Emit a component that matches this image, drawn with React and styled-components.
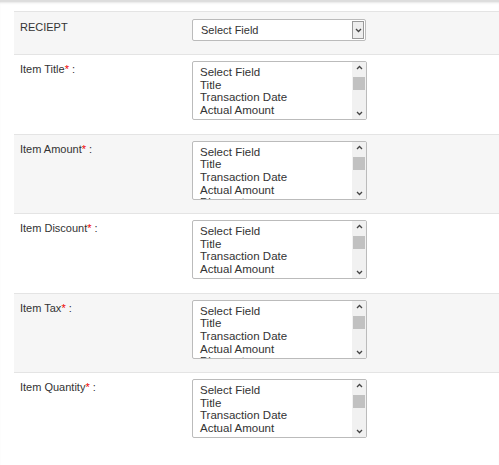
import React from "react";
import styled, { createGlobalStyle } from "styled-components";

const G = createGlobalStyle`
  body { margin: 0; background: #fff; font-family: "Liberation Sans", Arial, sans-serif; }
`;
const Page = styled.div`
  width: 499px; height: 465px; overflow: hidden; position: relative;
  border-top: 1px solid #ddd; box-shadow: inset 0 3px 3px -2px #ccc;
  padding: 10px 0 0 14px; box-sizing: border-box;
`;
const Row = styled.div`
  display: flex; align-items: flex-start;
  background: ${p => (p.$alt ? "#f6f6f6" : "#fff")};
  border-top: 1px solid #e4e4e4;
  height: ${p => p.$h}px; box-sizing: border-box;
  padding-top: ${p => p.$pt}px;
`;
const Label = styled.div`
  width: 172px; padding-left: 6px; font-size: 11px; color: #333; padding-top: ${p => p.$lt}px;
`;
const Star = styled.span` color: #e00; `;
const Select = styled.div`
  width: 174px; height: 22px; border: 1px solid #bbb; border-radius: 2px; background: #fff;
  box-sizing: border-box; display: flex; align-items: center; justify-content: space-between;
  font-size: 11px; color: #333; padding-left: 8px;
`;
const Arrow = styled.div`
  width: 12px; height: 18px; margin-right: 1px; border: 1px solid #999; background: #eee;
  display: flex; align-items: center; justify-content: center; box-sizing: border-box;
`;
const List = styled.div`
  width: 175px; height: 59px; border: 1px solid #bbb; border-radius: 2px; background: #fff;
  box-sizing: border-box; display: flex; overflow: hidden;
`;
const Options = styled.div`
  flex: 1; padding: 4px 0 0 7px; font-size: 11.5px; line-height: 12.7px; color: #333; overflow: hidden;
`;
const Bar = styled.div`
  width: 14px; background: #f1f1f1; display: flex; flex-direction: column; align-items: center;
  justify-content: space-between; padding: 3px 0;
`;
const Thumb = styled.div` width: 12px; height: 13px; background: #c1c1c1; margin-top: -14px; `;

const Chev = ({ up }) => (
  <svg width="7" height="5" viewBox="0 0 7 5"><path d={up ? "M1 4L3.5 1.5L6 4" : "M1 1L3.5 3.5L6 1"} fill="none" stroke="#444" strokeWidth="1.3" /></svg>
);

const opts = ["Select Field", "Title", "Transaction Date", "Actual Amount", "Discount"];
const items = ["Item Title", "Item Amount", "Item Discount", "Item Tax", "Item Quantity"];

export default function App() {
  return (
    <Page>
      <G />
      <Row $alt $h={43} $pt={7}>
        <Label $lt={2}>RECIEPT</Label>
        <Select>Select Field<Arrow><Chev /></Arrow></Select>
      </Row>
      {items.map((it, i) => (
        <Row key={it} $alt={i % 2 === 1} $h={79.5} $pt={6}>
          <Label $lt={2}>{it}<Star>*</Star> :</Label>
          <List>
            <Options>{opts.map(o => <div key={o}>{o}</div>)}</Options>
            <Bar><Chev up /><Thumb /><Chev /></Bar>
          </List>
        </Row>
      ))}
    </Page>
  );
}
